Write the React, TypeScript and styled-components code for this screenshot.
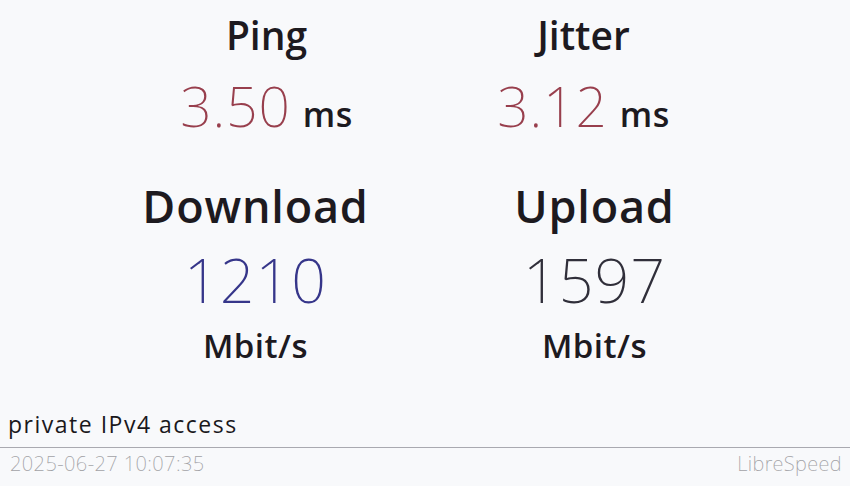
import React from 'react'
import styled, { createGlobalStyle } from 'styled-components'

const GlobalStyle = createGlobalStyle`
  html, body {
    margin: 0;
    padding: 0;
    background: #f8f9fb;
  }
  body {
    font-family: "Open Sans", "Noto Sans", "Liberation Sans", sans-serif;
    color: #1d1a1f;
  }
`

const thin = `"Noto Sans", "Open Sans", "Liberation Sans", sans-serif`

const Page = styled.div`
  height: 100vh;
  display: flex;
  flex-direction: column;
  background: #f8f9fb;
  overflow: hidden;
`

const Main = styled.main`
  flex: 1;
  padding-top: 15px;
`

const Row = styled.section<{ $cell: number; $gap: number }>`
  display: flex;
  justify-content: center;
  margin-top: ${p => p.$gap}px;
  & > * {
    width: ${p => p.$cell}px;
  }
`

const Cell = styled.div`
  display: flex;
  flex-direction: column;
  align-items: center;
`

const Label = styled.div<{ $size: number; $track?: number }>`
  font-weight: 600;
  font-size: ${p => p.$size}px;
  line-height: ${p => p.$size}px;
  letter-spacing: ${p => p.$track ?? 0}px;
  white-space: nowrap;
`

const Reading = styled.div<{ $gap: number }>`
  display: flex;
  align-items: baseline;
  gap: 12px;
  margin-top: ${p => p.$gap}px;
`

const Value = styled.span<{ $size: number; $color: string }>`
  font-family: ${thin};
  font-weight: 200;
  font-size: ${p => p.$size}px;
  line-height: ${p => p.$size}px;
  letter-spacing: 1px;
  color: ${p => p.$color};
`

const Unit = styled.span<{ $size: number; $gap?: number }>`
  font-weight: 600;
  font-size: ${p => p.$size}px;
  line-height: ${p => p.$size}px;
  letter-spacing: 0.5px;
  margin-top: ${p => p.$gap ?? 0}px;
`

const Footer = styled.footer`
  display: flex;
  flex-direction: column;
`

const Note = styled.div`
  font-size: 23px;
  line-height: 23px;
  letter-spacing: 1.5px;
  padding: 0 8px;
  margin-bottom: 11px;
  color: #1a181c;
`

const Meta = styled.div`
  display: flex;
  justify-content: space-between;
  border-top: 1px solid #a9a9b0;
  padding: 6px 8px 12px 10px;
  font-family: ${thin};
  font-weight: 200;
  font-size: 20px;
  line-height: 20px;
  letter-spacing: 0.4px;
  color: #a2a2a6;
`

type Metric = { label: string; value: string; color: string }

const latency: Metric[] = [
  { label: 'Ping', value: '3.50', color: '#983f4d' },
  { label: 'Jitter', value: '3.12', color: '#983f4d' },
]

const speed: Metric[] = [
  { label: 'Download', value: '1210', color: '#36368a' },
  { label: 'Upload', value: '1597', color: '#302f3a' },
]

const App: React.FC = () => {
  return (
    <Page>
      <GlobalStyle />
      <Main>
        <Row $cell={317} $gap={0}>
          {latency.map(m => (
            <Cell key={m.label}>
              <Label $size={39}>{m.label}</Label>
              <Reading $gap={24}>
                <Value $size={55} $color={m.color}>{m.value}</Value>
                <Unit $size={34}>ms</Unit>
              </Reading>
            </Cell>
          ))}
        </Row>
        <Row $cell={339} $gap={50}>
          {speed.map(m => (
            <Cell key={m.label}>
              <Label $size={45} $track={0.8}>{m.label}</Label>
              <Reading $gap={21}>
                <Value $size={61} $color={m.color}>{m.value}</Value>
              </Reading>
              <Unit $size={33} $gap={19}>Mbit/s</Unit>
            </Cell>
          ))}
        </Row>
      </Main>
      <Footer>
        <Note>private IPv4 access</Note>
        <Meta>
          <span>2025-06-27 10:07:35</span>
          <span>LibreSpeed</span>
        </Meta>
      </Footer>
    </Page>
  )
}

export default App
